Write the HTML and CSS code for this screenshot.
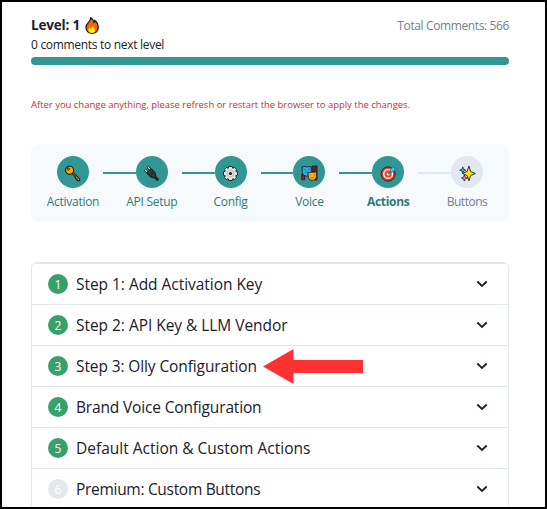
FILE: index.html
```
<!DOCTYPE html>
<html lang="en">
<head>
<meta charset="utf-8">
<title>Settings</title>
<link rel="stylesheet" href="styles.css">
</head>
<body>
<main class="frame">
  <header class="level">
    <div class="level-row">
      <h1><span class="t-level">Level: 1</span>
        <svg class="fire" viewBox="0 0 14 17"><path d="M5.800.7C9 2.600 8.700 4.500 9 5.500c.8-.6.9-1.300.9-2C12.600 5.700 13.200 8.500 13.200 10.600c0 3.500-2.700 5.700-6 5.700s-6.300-2.200-6.300-5.800c0-2.400 1.100-3.600 2.400-4.900C4.700 4.200 5.900 3 5.800.7z" fill="#f7630c" stroke="#201816" stroke-width="1.300"/><path d="M4 15.200C2.500 12.600 4.200 11.700 4.800 10.200c.7.5.9 1 1 1.800C7 11.200 7.200 10 7.100 9c2.300 1.300 3.600 3.900 2.500 6.200-1.400 1-4 .9-5.600 0z" fill="#fff000"/></svg>
      </h1>
      <p class="total">Total Comments: 566</p>
    </div>
    <p class="next">0 comments to next level</p>
    <div class="progress"></div>
  </header>
  <p class="notice">After you change anything, please refresh or restart the browser to apply the changes.</p>

  <ol class="stepper">
    <li class="step">
      <span class="disc"><svg viewBox="0 0 18 18"><path d="M9.500 7.500 16.500 14.800v1.700h-2.700v-2h-1.600v-1.700l-4-4z" fill="#ff9f00" stroke="#241d14" stroke-width="1.200"/><circle cx="5.900" cy="5.600" r="4.300" fill="#ffa500" stroke="#241d14" stroke-width="1.200"/><circle cx="4.700" cy="4.300" r="1.300" fill="#319795" stroke="#241d14" stroke-width=".7"/></svg></span>
      <span class="label l1">Activation</span>
    </li>
    <li class="step">
      <i class="line"></i><span class="disc"><svg viewBox="0 0 18 18"><path d="m2 5 2.500 2.500M5 2l2.500 2.500" stroke="#191919" stroke-width="2.800"/><path d="m2.300 5.300 2 2M5.300 2.300l2 2" stroke="#ddd" stroke-width="1.300"/><path d="m4 8.500 4.700-4.700 4 4.200 1.200 4.500 2.800 2.500-1.500 1.700-3-2.800-4.400-1.200z" fill="#302f31" stroke="#151515"/><path d="m6 8.800 3-3m1 6 2-2" stroke="#59575b" stroke-width=".8"/></svg></span>
      <span class="label l2">API Setup</span>
    </li>
    <li class="step">
      <i class="line"></i><span class="disc"><svg viewBox="0 0 18 18"><path d="m7.200 1.600 3.600 0 .6 1.900 2-.9 2 2-.9 2 1.900.6v3.600l-1.900.6.9 2-2 2-2-.9-.6 1.900H7.200l-.6-1.900-2 .9-2-2 .9-2-1.900-.6V7.200l1.900-.6-.9-2 2-2 2 .9z" fill="#e2e0e1" stroke="#222" stroke-linejoin="round"/><circle cx="9" cy="9" r="3.500" fill="none" stroke="#aaa" stroke-width=".7"/><circle cx="9" cy="9" r="1.700" fill="#222"/></svg></span>
      <span class="label l3">Config</span>
    </li>
    <li class="step">
      <i class="line"></i><span class="disc"><svg viewBox="0 0 18 18"><path d="M.8 9.500h3v6h-3zM12 1h2v6h-2zM15 1h2v15h-2z" fill="#c50f1f" stroke="#251719" stroke-width=".9"/><path d="M1.200 2c2 0 2.200-.8 4.700-.1 1.800.5 2.500-.6 5-.1V7c0 3-2 4.800-4.900 4.800S1.200 9.500 1.200 7z" fill="#28afea" stroke="#17232a"/><path d="m3 4.500 2 .4m2.500 0 2-.4M4 8.300c1.200-1 2.700-1 4 0" fill="none" stroke="#145b80" stroke-width=".8"/><path d="M7.500 8c2 .4 2.400-.8 4.400-.3 2 .5 2.400-.6 4.400-.1v4c0 3-1.800 4.700-4.300 4.700s-4.500-1.700-4.500-4.700z" fill="#ffb51d" stroke="#2a2111"/><path d="m9.300 10.300 1.500.2m2.300 0 1.600-.2m-5 2.500c1.300 1.500 3 1.500 4.200 0" fill="none" stroke="#7b5200" stroke-width=".8"/></svg></span>
      <span class="label l4">Voice</span>
    </li>
    <li class="step current">
      <i class="line"></i><span class="disc"><svg viewBox="0 0 18 18"><circle cx="8.600" cy="9.500" r="7.500" fill="#ed3f2c" stroke="#2a1714"/><circle cx="8.600" cy="9.500" r="4.600" fill="#ed3f2c" stroke="#fff" stroke-width="1.500"/><circle cx="8.600" cy="9.500" r="1.600" fill="#fff"/><path d="m8.600 9.500 4-4" stroke="#1b759c" stroke-width="1.300"/><path d="m10.800 5.300 3.200-3.700.8 1.600 2.400.3-3.700 3.900-2.300.2z" fill="#41c5f3" stroke="#1b759c" stroke-width=".8"/></svg></span>
      <span class="label l5">Actions</span>
    </li>
    <li class="step pending">
      <i class="line"></i><span class="disc"><svg viewBox="0 0 18 18"><path d="m4 2 .9 2.500 2.400 1-2.400 1L4 9l-.9-2.500-2.400-1 2.400-1z" fill="#28afea" stroke="#222" stroke-width=".8"/><path d="m5.700 10.500.9 2.300 2.300 1-2.300 1-.9 2.300-.9-2.300-2.300-1 2.300-1z" fill="#ed83c0" stroke="#222" stroke-width=".8"/><path d="m10.500 1.200 1.800 5.600 5 2.200-5 2.200-1.800 5.600-1.900-5.600L3.700 9l4.900-2.200z" fill="#ffe600" stroke="#222" stroke-linejoin="round"/></svg></span>
      <span class="label l6">Buttons</span>
    </li>
  </ol>

  <section class="accordion">
    <button class="item"><span class="badge">1</span><span class="title a1">Step 1: Add Activation Key</span><svg class="chev" viewBox="0 0 12 8"><path d="m1.300 1.500 4.700 4.400 4.700-4.400"/></svg></button>
    <button class="item"><span class="badge">2</span><span class="title a2">Step 2: API Key &amp; LLM Vendor</span><svg class="chev" viewBox="0 0 12 8"><path d="m1.300 1.500 4.700 4.400 4.700-4.400"/></svg></button>
    <button class="item"><span class="badge">3</span><span class="title a3">Step 3: Olly Configuration</span><svg class="arrow" viewBox="0 0 100 35"><path d="M0 17.500 30.500 0v11H100v13H30.500v11z"/></svg><svg class="chev" viewBox="0 0 12 8"><path d="m1.300 1.500 4.700 4.400 4.700-4.400"/></svg></button>
    <button class="item"><span class="badge">4</span><span class="title a4">Brand Voice Configuration</span><svg class="chev" viewBox="0 0 12 8"><path d="m1.300 1.500 4.700 4.400 4.700-4.400"/></svg></button>
    <button class="item"><span class="badge">5</span><span class="title a5">Default Action &amp; Custom Actions</span><svg class="chev" viewBox="0 0 12 8"><path d="m1.300 1.500 4.700 4.400 4.700-4.400"/></svg></button>
    <button class="item"><span class="badge off">6</span><span class="title a6">Premium: Custom Buttons</span><svg class="chev" viewBox="0 0 12 8"><path d="m1.300 1.500 4.700 4.400 4.700-4.400"/></svg></button>
  </section>
</main>
</body>
</html>
```

FILE: styles.css
```
* { box-sizing: border-box; }
body, h1, p, ol { margin: 0; padding: 0; }
svg { display: block; flex: none; }
body { background: #fff; color: #1a202c; font-family: "Segoe UI", "Open Sans", "Noto Sans", sans-serif; overflow: hidden; }
.frame { width: 547px; height: 509px; border: 2px solid #000; padding: 14px 36px 0 29px; overflow: hidden; }
.level-row { display: flex; justify-content: space-between; height: 20px; }
h1 { display: flex; gap: 5px; font-size: 13.5px; line-height: 19px; font-weight: 700; white-space: nowrap; }
.t-level { letter-spacing: -.18px; }
.fire { width: 14px; height: 17px; margin-top: 1px; }
.total { font-size: 12px; line-height: 20px; color: #718096; letter-spacing: -.38px; white-space: nowrap; }
.next { font-size: 12px; line-height: 18px; height: 21px; letter-spacing: -.3px; white-space: nowrap; }
.progress { height: 8px; border-radius: 4px; background: #319795; }
.notice { margin-top: 32px; height: 15px; font-size: 9.5px; line-height: 15px; letter-spacing: -.02px; color: #c53030; white-space: nowrap; }

.stepper { list-style: none; margin-top: 32px; height: 78px; padding: 12px 2.6px 0; display: grid; grid-template-columns: repeat(6, 1fr); background: #f7fafc; border-radius: 8px; }
.step { display: grid; grid-template-columns: 1fr 32px 1fr; grid-template-rows: 32px 28px; min-width: 0; }
.line { grid-area: 1 / 1; height: 2px; margin: 16px 0 0 -9.4px; background: #319795; }
.disc { grid-area: 1 / 2; width: 32px; height: 32px; border-radius: 50%; background: #319795; display: grid; place-items: center; }
.disc svg { width: 17px; height: 17px; margin-top: 2px; }
.label { grid-area: 2 / 1 / 3 / 4; justify-self: center; font-size: 12px; line-height: 28px; letter-spacing: -.28px; color: #2c7a7b; white-space: nowrap; }
.current .label { font-weight: 700; letter-spacing: -.3px; }
.pending .line, .pending .disc { background: #e2e8f0; }
.pending .label { color: #718096; letter-spacing: -.48px; }

.accordion { margin-top: 40px; height: 249px; border: 1px solid #e2e8f0; border-radius: 6px; overflow: hidden; }
.item { display: flex; align-items: center; width: 100%; height: 41px; padding: 0 20px 0 16px; border: 0; border-top: 1px solid #e2e8f0; background: #fff; color: inherit; font-family: inherit; text-align: left; }
.badge { width: 20px; height: 20px; margin-right: 8px; border-radius: 50%; background: #38a169; color: #fff; font-size: 12px; line-height: 21px; text-align: center; }
.badge.off { background: #e2e8f0; }
.title { font-size: 15.5px; line-height: 24px; white-space: nowrap; letter-spacing: -.04px; }
.a3 { letter-spacing: -.11px; }
.a4 { letter-spacing: -.16px; }
.a5 { letter-spacing: 0; }
.a6 { letter-spacing: -.3px; }
.chev { width: 12px; height: 8px; margin-left: auto; }
.chev path { fill: none; stroke: #1a202c; stroke-width: 1.8; }
.arrow { width: 100px; height: 35px; margin-left: 6px; }
.arrow path { fill: #ff3131; }
```
